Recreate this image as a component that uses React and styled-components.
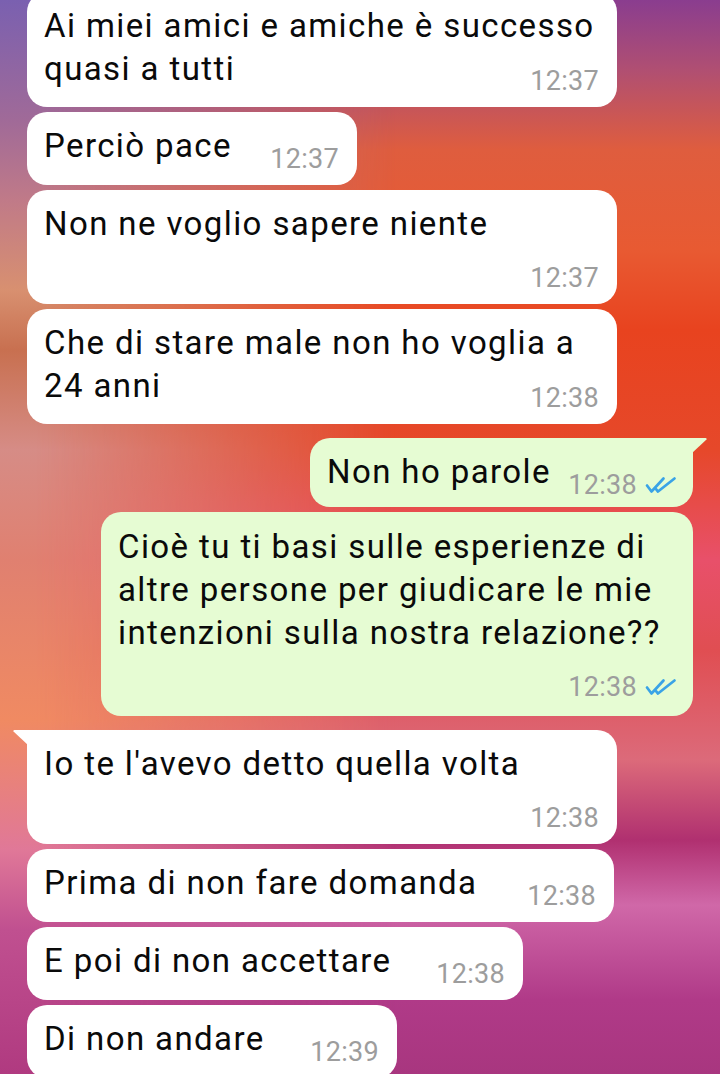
import React from "react";
import styled, { createGlobalStyle, css } from "styled-components";

const GlobalStyle = createGlobalStyle`
  html, body {
    margin: 0;
    padding: 0;
    width: 720px;
    height: 1074px;
    overflow: hidden;
  }
  body {
    font-family: Roboto, "Noto Sans", sans-serif;
  }
`;

const messages = [
  { id: 1, out: false, w: 590, layout: "float", text: ["Ai miei amici e amiche è successo", "quasi a tutti"], time: "12:37" },
  { id: 2, out: false, w: 330, layout: "inline", text: ["Perciò pace"], time: "12:37" },
  { id: 3, out: false, w: 590, layout: "stack", text: ["Non ne voglio sapere niente"], time: "12:37" },
  { id: 4, out: false, w: 590, layout: "float", text: ["Che di stare male non ho voglia a", "24 anni"], time: "12:38" },
  { id: 5, out: true, w: 383, layout: "inline", tail: true, text: ["Non ho parole"], time: "12:38" },
  {
    id: 6,
    out: true,
    w: 592,
    layout: "stack",
    text: [
      "Cioè tu ti basi sulle esperienze di",
      "altre persone per giudicare le mie",
      "intenzioni sulla nostra relazione??",
    ],
    time: "12:38",
  },
  { id: 7, out: false, w: 590, layout: "stack", tail: true, text: ["Io te l'avevo detto quella volta"], time: "12:38" },
  { id: 8, out: false, w: 587, layout: "inline", text: ["Prima di non fare domanda"], time: "12:38" },
  { id: 9, out: false, w: 496, layout: "inline", text: ["E poi di non accettare"], time: "12:38" },
  { id: 10, out: false, w: 370, layout: "inline", text: ["Di non andare"], time: "12:39" },
];

// double blue tick for read messages
function Ticks() {
  return (
    <svg width="32" height="18" viewBox="0 0 32 18" fill="none">
      <path
        d="M2 9.5 L6.5 15.5 L18.5 2.5"
        stroke="#3aa3e6"
        strokeWidth="2.7"
        strokeLinecap="round"
        strokeLinejoin="round"
      />
      <path
        d="M11 13.2 L13 15.5 L29.5 2.5"
        stroke="#3aa3e6"
        strokeWidth="2.7"
        strokeLinecap="round"
        strokeLinejoin="round"
      />
    </svg>
  );
}

function Message({ msg }) {
  return (
    <Bubble $out={msg.out} $w={msg.w} $tail={msg.tail} $layout={msg.layout}>
      <Body>
        {msg.text.map((line, i) => (
          <Line key={i}>{line}</Line>
        ))}
      </Body>
      <Meta $layout={msg.layout}>
        <Time>{msg.time}</Time>
        {msg.out && <Ticks />}
      </Meta>
    </Bubble>
  );
}

export default function App() {
  return (
    <Screen>
      <GlobalStyle />
      <Chat>
        {messages.map((m, i) => {
          const prev = messages[i - 1];
          const switched = prev && prev.out !== m.out;
          return (
            <Row key={m.id} $out={m.out} $switched={switched}>
              <Message msg={m} />
            </Row>
          );
        })}
      </Chat>
    </Screen>
  );
}

const Screen = styled.div`
  position: relative;
  width: 720px;
  height: 1074px;
  overflow: hidden;
  background: linear-gradient(
    to bottom,
    #8a3d8f 0px,
    #b04f72 70px,
    #df5d3e 150px,
    #e85a32 250px,
    #e8431f 330px,
    #e6482a 450px,
    #e8506a 560px,
    #e04e52 650px,
    #dc6a7a 760px,
    #b03070 840px,
    #d068a8 905px,
    #b03a88 1000px,
    #a8367f 1074px
  );

  &::before {
    content: "";
    position: absolute;
    inset: 0;
    background: linear-gradient(
      to bottom,
      #7a60b0 0px,
      #a06a98 120px,
      #c07a88 200px,
      #d89070 290px,
      #c87050 350px,
      #d68c86 450px,
      #e08070 560px,
      #f08a62 720px,
      #e07898 850px,
      #c05090 930px,
      #b03a80 1074px
    );
    -webkit-mask-image: linear-gradient(to right, #000 0, #000 5%, transparent 55%);
    mask-image: linear-gradient(to right, #000 0, #000 5%, transparent 55%);
  }
`;

const Chat = styled.div`
  position: relative;
  z-index: 1;
  display: flex;
  flex-direction: column;
  gap: 5px;
  margin-top: -8px;
  padding: 0 27px;
`;

const Row = styled.div`
  display: flex;
  justify-content: ${(p) => (p.$out ? "flex-end" : "flex-start")};
  margin-top: ${(p) => (p.$switched ? "9px" : "0")};
`;

const Bubble = styled.div`
  position: relative;
  box-sizing: border-box;
  width: ${(p) => p.$w}px;
  background: ${(p) => (p.$out ? "#e6fcd3" : "#ffffff")};
  border-radius: 20px;
  padding: 12px 18px 11px 17px;
  display: flex;
  flex-direction: ${(p) => (p.$layout === "inline" ? "row" : "column")};
  justify-content: space-between;
  align-items: ${(p) => (p.$layout === "inline" ? "flex-start" : "stretch")};

  ${(p) =>
    p.$out &&
    css`
      padding: ${p.$layout === "inline" ? "12px 16px 7px 17px" : "13px 16px 14px 17px"};
    `}

  ${(p) =>
    p.$tail &&
    p.$out &&
    css`
      border-top-right-radius: 0;
      &::after {
        content: "";
        position: absolute;
        top: 0;
        right: -14px;
        width: 16px;
        height: 16px;
        background: #e6fcd3;
        clip-path: polygon(0 0, 92% 0, 100% 6%, 0 100%);
      }
    `}

  ${(p) =>
    p.$tail &&
    !p.$out &&
    css`
      border-top-left-radius: 0;
      &::after {
        content: "";
        position: absolute;
        top: 0;
        left: -14px;
        width: 16px;
        height: 16px;
        background: #ffffff;
        clip-path: polygon(8% 0, 100% 0, 100% 100%, 0 6%);
      }
    `}
`;

const Body = styled.div`
  color: #0a0a0a;
  font-family: Roboto, "Noto Sans", sans-serif;
  font-size: 33px;
  line-height: 43px;
  letter-spacing: 1.4px;
`;

const Line = styled.div`
  white-space: nowrap;
`;

const Meta = styled.div`
  display: flex;
  align-items: center;
  justify-content: flex-end;
  gap: 8px;
  ${(p) =>
    p.$layout === "float" &&
    css`
      margin-top: -24px;
    `}
  ${(p) =>
    p.$layout === "stack" &&
    css`
      margin-top: 18px;
    `}
  ${(p) =>
    p.$layout === "inline" &&
    css`
      margin-top: 20px;
    `}
`;

const Time = styled.span`
  font-family: Roboto, "Noto Sans", sans-serif;
  font-size: 27px;
  line-height: 30px;
  letter-spacing: 0.3px;
  color: #9d9d9d;
`;
